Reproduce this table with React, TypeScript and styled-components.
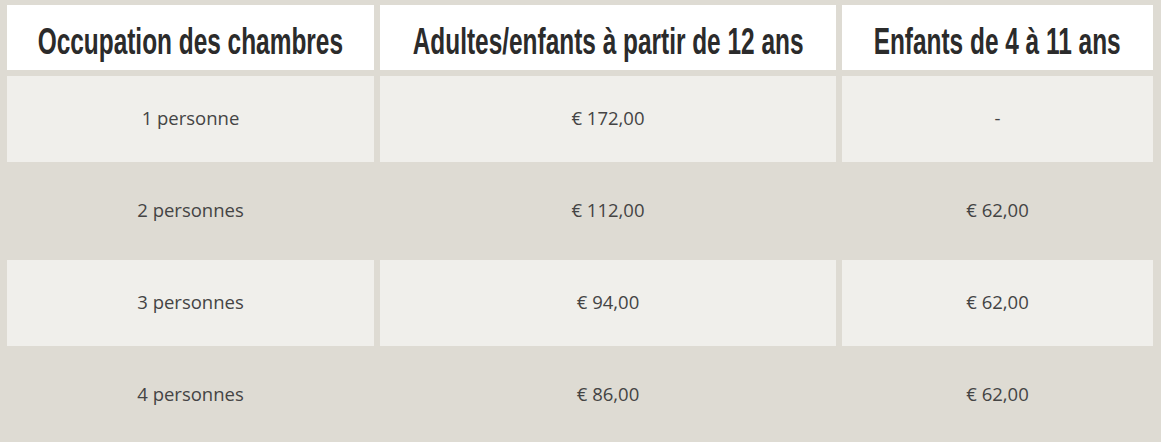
import React from "react";
import styled, { createGlobalStyle } from "styled-components";

const GlobalStyle = createGlobalStyle`
  html, body {
    margin: 0;
    padding: 0;
    background: #dedbd3;
  }
`;

const Table = styled.div`
  display: grid;
  grid-template-columns: 367px 456px 311px;
  grid-template-rows: 65px repeat(4, 86px);
  column-gap: 6px;
  row-gap: 6px;
  padding: 5px 0 0 7px;
  width: 1161px;
  height: 442px;
  box-sizing: border-box;
  overflow: hidden;
`;

const HeadCell = styled.div`
  background: #ffffff;
  display: flex;
  align-items: center;
  justify-content: center;
  padding-top: 8px;
  box-sizing: border-box;
  overflow: hidden;
`;

// no condensed face installed, so the bold sans is squeezed to the DIN-like width
const HeadText = styled.span`
  display: inline-block;
  font-family: "Liberation Sans", Arial, sans-serif;
  font-weight: 700;
  font-size: 37px;
  line-height: 1;
  color: #2b2b2b;
  white-space: nowrap;
  transform: scaleX(0.66);
`;

const Cell = styled.div<{ $light: boolean }>`
  background: ${(p) => (p.$light ? "#f0efeb" : "transparent")};
  display: flex;
  align-items: center;
  justify-content: center;
  padding-bottom: 4px;
  box-sizing: border-box;
  font-family: "Open Sans", sans-serif;
  font-size: 18.5px;
  color: #444444;
`;

const headers = [
  "Occupation des chambres",
  "Adultes/enfants à partir de 12 ans",
  "Enfants de 4 à 11 ans",
];

const rows = [
  ["1 personne", "€ 172,00", "-"],
  ["2 personnes", "€ 112,00", "€ 62,00"],
  ["3 personnes", "€ 94,00", "€ 62,00"],
  ["4 personnes", "€ 86,00", "€ 62,00"],
];

export default function App() {
  return (
    <>
      <GlobalStyle />
      <Table>
        {headers.map((h) => (
          <HeadCell key={h}>
            <HeadText>{h}</HeadText>
          </HeadCell>
        ))}
        {rows.map((row, i) =>
          row.map((value, j) => (
            <Cell key={`${i}-${j}`} $light={i % 2 === 0}>
              {value}
            </Cell>
          ))
        )}
      </Table>
    </>
  );
}
